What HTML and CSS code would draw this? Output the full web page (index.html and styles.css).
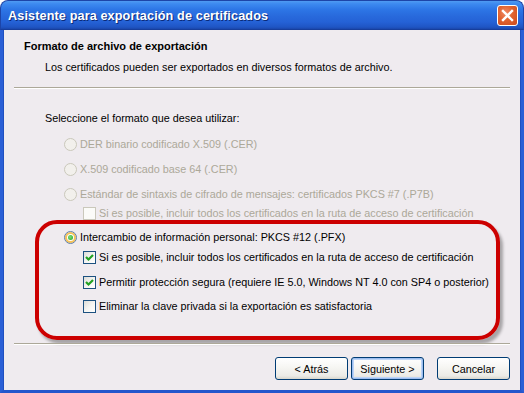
FILE: index.html
```html
<!DOCTYPE html>
<html lang="es">
<head>
<meta charset="utf-8">
<title>Asistente para exportación de certificados</title>
<link rel="stylesheet" href="styles.css">
</head>
<body>
<div class="window">
  <div class="titlebar">
    <span class="title">Asistente para exportación de certificados</span>
    <span class="close"><svg width="13" height="13" viewBox="0 0 13 13"><path d="M2 2 L11 11 M11 2 L2 11" stroke="#fff" stroke-width="2.4" stroke-linecap="square"/></svg></span>
  </div>
  <div class="frame">
    <div class="header">
      <div class="h-title">Formato de archivo de exportación</div>
      <div class="h-sub">Los certificados pueden ser exportados en diversos formatos de archivo.</div>
    </div>
    <div class="sep sep-top"></div>
    <div class="content">
      <div class="prompt">Seleccione el formato que desea utilizar:</div>
      <div class="options">
        <div class="row disabled"><span class="radio"></span><span>DER binario codificado X.509 (.CER)</span></div>
        <div class="row disabled gap12"><span class="radio"></span><span>X.509 codificado base 64 (.CER)</span></div>
        <div class="row disabled gap12"><span class="radio"></span><span>Estándar de sintaxis de cifrado de mensajes: certificados PKCS #7 (.P7B)</span></div>
        <div class="row disabled sub gap6"><span class="check"></span><span>Si es posible, incluir todos los certificados en la ruta de acceso de certificación</span></div>
      </div>
      <div class="highlight">
        <div class="row"><span class="radio on"><span class="dot"></span></span><span>Intercambio de información personal: PKCS #12 (.PFX)</span></div>
        <div class="row sub gap7"><span class="check on"><svg width="11" height="11" viewBox="0 0 11 11"><path d="M2 5 L4.5 7.5 L9 3" fill="none" stroke="#21a121" stroke-width="2.2"/></svg></span><span>Si es posible, incluir todos los certificados en la ruta de acceso de certificación</span></div>
        <div class="row sub gap12"><span class="check on"><svg width="11" height="11" viewBox="0 0 11 11"><path d="M2 5 L4.5 7.5 L9 3" fill="none" stroke="#21a121" stroke-width="2.2"/></svg></span><span>Permitir protección segura (requiere IE 5.0, Windows NT 4.0 con SP4 o posterior)</span></div>
        <div class="row sub gap11"><span class="check"></span><span>Eliminar la clave privada si la exportación es satisfactoria</span></div>
      </div>
    </div>
    <div class="footer">
      <div class="sep"></div>
      <div class="buttons">
        <button class="btn">&lt; Atrás</button>
        <button class="btn default">Siguiente &gt;</button>
        <button class="btn cancel">Cancelar</button>
      </div>
    </div>
  </div>
</div>
</body>
</html>
```

FILE: styles.css
```css
* { box-sizing: border-box; }
html, body { margin: 0; padding: 0; background: #fff; }
body {
  font-family: "Liberation Sans", Arial, sans-serif;
  font-size: 10.8px;
  color: #000;
}
.window {
  width: 524px;
  height: 393px;
  display: flex;
  flex-direction: column;
}
.titlebar {
  height: 30px;
  flex: none;
  display: flex;
  align-items: center;
  justify-content: space-between;
  padding: 0 5px 0 7px;
  border-radius: 8px 8px 0 0;
  background: linear-gradient(#4f9bf2 0%, #3d8af0 10%, #2d76e6 30%, #2869dc 55%, #2562d6 75%, #1f55c4 93%, #1a47ac 100%);
  border: 1px solid #1d45a8;
  border-bottom: 1px solid #173e9c;
}
.title {
  color: #fff;
  font-weight: bold;
  font-size: 12.7px;
  text-shadow: 1px 1px 0 #0a2a78;
  letter-spacing: 0.1px;
  padding-top: 1px;
}
.close {
  width: 21px;
  height: 21px;
  border: 1px solid #fff;
  border-radius: 3px;
  background: radial-gradient(circle at 40% 35%, #f08a66 0%, #e0622f 45%, #cc4a1c 100%);
  display: flex;
  align-items: center;
  justify-content: center;
  margin-top: 1px;
}
.frame {
  flex: 1;
  display: flex;
  flex-direction: column;
  background: #efebef;
  border-left: 3px solid #2a5fd6;
  border-right: 3px solid #2a5fd6;
  border-bottom: 3px solid #2456cc;
  box-shadow: inset 1px 0 0 #1f4fc0, inset -1px 0 0 #1f4fc0;
}
.header { padding-top: 10px; }
.h-title {
  font-weight: bold;
  font-size: 11px;
  line-height: 13px;
  padding-left: 21px;
}
.h-sub {
  line-height: 13px;
  margin-top: 8px;
  padding-left: 42px;
}
.sep {
  height: 2px;
  margin: 0 11px;
  border-top: 1px solid #aca899;
  border-bottom: 1px solid #fff;
}
.sep-top { margin-top: 13px; }
.content { padding-top: 23px; }
.prompt { line-height: 13px; padding-left: 42px; }
.options { margin-top: 13px; padding-left: 61px; }
.row {
  display: flex;
  align-items: center;
  gap: 3px;
  height: 13px;
  line-height: 13px;
  white-space: nowrap;
}
.row.disabled { color: #aca899; }
.sub { margin-left: 19px; }
.gap6 { margin-top: 6px; }
.gap7 { margin-top: 7px; }
.gap11 { margin-top: 11px; }
.gap12 { margin-top: 12px; }
.radio {
  width: 13px;
  height: 13px;
  flex: none;
  border-radius: 50%;
  border: 1px solid #cac8bb;
  background: #f2f0ec;
  display: flex;
  align-items: center;
  justify-content: center;
}
.radio.on {
  border: 1px solid #607fa8;
  background: #fff;
  box-shadow: inset 0 0 0 2px #f6c35a;
}
.radio .dot {
  width: 5px;
  height: 5px;
  border-radius: 50%;
  background: radial-gradient(circle at 40% 40%, #7ce07c, #21a121);
}
.check {
  width: 13px;
  height: 13px;
  flex: none;
  border: 1px solid #cac8bb;
  background: #fbfbf8;
  display: flex;
  align-items: center;
  justify-content: center;
}
.check.on, .highlight .check {
  border: 1px solid #1c5180;
  background: linear-gradient(135deg, #dcdcd7 0%, #f4f4f1 50%, #fff 100%);
}
.highlight {
  margin-left: 32px;
  width: 465px;
  height: 120px;
  border: 4px solid #cc0000;
  border-radius: 22px;
  padding: 7px 0 0 25px;
  box-shadow: 3px 4px 3px rgba(0, 0, 0, 0.3);
}
.footer { margin-top: auto; }
.buttons {
  display: flex;
  justify-content: flex-end;
  padding: 12px 11px 10px 0;
}
.btn {
  width: 73px;
  height: 23px;
  font-family: inherit;
  font-size: 10.8px;
  color: #000;
  border: 1px solid #003c74;
  border-radius: 3px;
  background: linear-gradient(#ffffff 0%, #f7f7f4 40%, #ecebe6 85%, #d8d6cc 100%);
  padding: 0;
  margin-left: 3px;
}
.btn.default {
  box-shadow: inset 0 0 0 1px #9cbdf0, inset 0 0 0 2px #bcd4f6;
}
.btn.cancel { margin-left: 13px; }
```
